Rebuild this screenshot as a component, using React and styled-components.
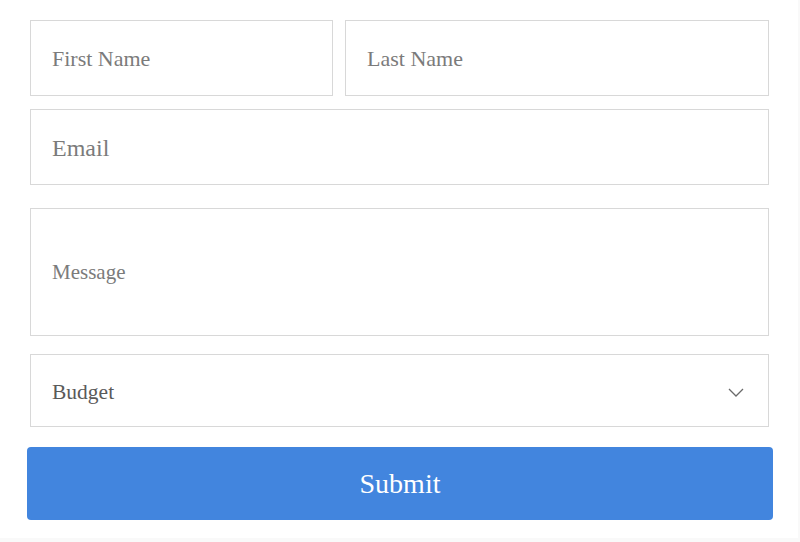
import styled, { createGlobalStyle } from 'styled-components';

const GlobalStyle = createGlobalStyle`
  html, body {
    margin: 0;
    padding: 0;
    background: #f9f9f9;
  }
  * {
    box-sizing: border-box;
  }
`;

const App = () => {
  return (
    <>
      <GlobalStyle />
      <Page>
        <Form onSubmit={(e) => e.preventDefault()}>
          <NameRow>
            <Field placeholder='First Name' />
            <Field placeholder='Last Name' />
          </NameRow>
          <Field placeholder='Email' $size={24} />
          <Message placeholder='Message' />
          <SelectWrap>
            <Select defaultValue=''>
              <option value='' disabled>
                Budget
              </option>
              <option>Under $1,000</option>
              <option>$1,000 – $5,000</option>
              <option>$5,000+</option>
            </Select>
            <Chevron viewBox='0 0 16 9' aria-hidden='true'>
              <polyline points='1,1 8,8 15,1' />
            </Chevron>
          </SelectWrap>
          <SubmitButton type='submit'>Submit</SubmitButton>
        </Form>
      </Page>
    </>
  );
};

const Page = styled.div`
  width: 798px;
  height: 538px;
  background: #fff;
  padding: 20px 29px 0 30px;
`;

const Form = styled.form`
  display: flex;
  flex-direction: column;
  width: 739px;
  font-family: 'Liberation Serif', 'DejaVu Serif', serif;
`;

const NameRow = styled.div`
  display: grid;
  grid-template-columns: 303px 1fr;
  column-gap: 12px;
  margin-bottom: 13px;
`;

const fieldBase = `
  display: block;
  width: 100%;
  border: 1px solid #d8d8d8;
  border-radius: 0;
  background: #fff;
  font-family: 'Liberation Serif', 'DejaVu Serif', serif;
  color: #555;
  outline: none;
  &::placeholder {
    color: #7b7b7b;
    opacity: 1;
  }
`;

const Field = styled.input`
  ${fieldBase}
  height: 76px;
  padding: 2px 21px 0;
  font-size: ${(p) => p.$size || 22}px;
`;

const Message = styled.textarea`
  ${fieldBase}
  height: 128px;
  margin-top: 23px;
  padding: 51px 21px 0;
  font-size: 21px;
  line-height: 24px;
  resize: none;
`;

const SelectWrap = styled.div`
  position: relative;
  margin-top: 18px;
`;

const Select = styled.select`
  ${fieldBase}
  appearance: none;
  height: 73px;
  padding: 3px 21px 0;
  font-size: 21.5px;
  color: #5a5a5a;
`;

const Chevron = styled.svg`
  position: absolute;
  right: 25px;
  top: 34px;
  width: 16px;
  height: 9px;
  fill: none;
  stroke: #6a6a6a;
  stroke-width: 1.3;
  pointer-events: none;
`;

const SubmitButton = styled.button`
  margin: 20px -4px 0 -3px;
  height: 73px;
  border: none;
  border-radius: 4px;
  background: #4285de;
  color: #fff;
  font-family: 'Liberation Serif', 'DejaVu Serif', serif;
  font-size: 28px;
  cursor: pointer;
`;

export default App;
